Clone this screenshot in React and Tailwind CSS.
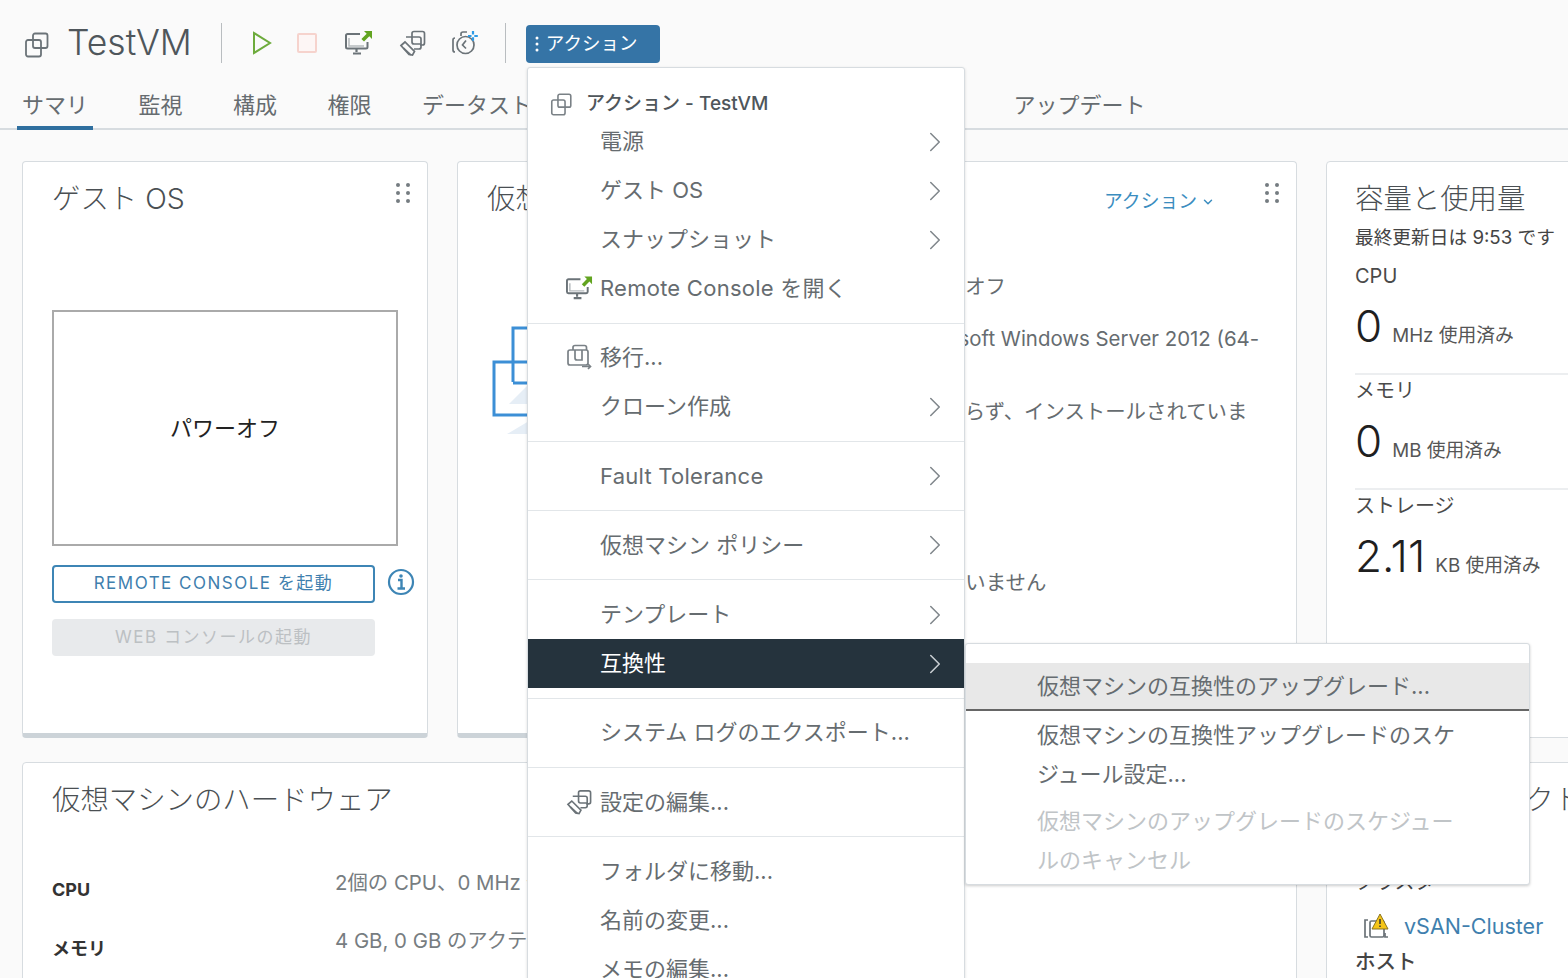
import { ChevronRight, ChevronDown } from 'lucide-react';

const TABS = ['サマリ', '監視', '構成', '権限', 'データストア', 'ネットワーク', 'スナップショット', 'アップデート'];

function VmIcon({ className }) {
  return (
    <svg viewBox="0 0 26 26" fill="none" stroke="currentColor" strokeWidth="1.8" className={className}>
      <path d="M9 8V3.500a2 2 0 0 1 2-2h10.500a2 2 0 0 1 2 2V14a2 2 0 0 1-2 2H17" />
      <rect x="2" y="8" width="15" height="16.500" rx="2" />
      <path d="M9 8v6a2 2 0 0 0 2 2h6" />
    </svg>
  );
}

function ConsoleIcon({ className }) {
  return (
    <svg viewBox="0 0 28 26" fill="none" className={className}>
      <path d="M15 4H2.500a1.500 1.500 0 0 0-1.500 1.500V17a1.500 1.500 0 0 0 1.500 1.500H21a1.500 1.500 0 0 0 1.500-1.500v-5" stroke="#6b7378" strokeWidth="2" />
      <path d="M4 8v8h15" stroke="#b5babd" strokeWidth="1.500" />
      <path d="M11.500 19v3M8 23.500h8" stroke="#6b7378" strokeWidth="2.200" />
      <path d="M19 1h8v8l-2.700-2.700-5.300 5.300-2.600-2.600 5.300-5.300z" fill="#62a420" />
    </svg>
  );
}

function EditIcon({ className }) {
  return (
    <svg viewBox="0 0 28 26" fill="none" stroke="#6b7378" strokeWidth="1.700" className={className}>
      <path d="M13 7V3.500a2 2 0 0 1 2-2h8.500a2 2 0 0 1 2 2V13a2 2 0 0 1-2 2H21" />
      <path d="M7 7h13a2 2 0 0 1 2 2v8a2 2 0 0 1-2 2h-5" />
      <path d="M13 7v5a2 2 0 0 0 2 2h7" />
      <path d="M2 15.500 6 12l9.500 9.500-2 3.500-3.500-.5z" />
      <path d="m4.500 18 7.500 7" />
    </svg>
  );
}

function SnapshotIcon({ className }) {
  return (
    <svg viewBox="0 0 28 26" fill="none" stroke="#6b7378" strokeWidth="1.700" className={className}>
      <path d="M10 6V4a2 2 0 0 1 2-2h4" />
      <path d="M4 8a2 2 0 0 0-2 2v10a2 2 0 0 0 2 2" />
      <circle cx="14.500" cy="15" r="8.500" />
      <path d="M15 10.500 11.500 15l3.500 3.500" />
      <path d="M22 1v10M17 6h10" stroke="#2e9be6" strokeWidth="2.200" strokeDasharray="3.500 2.800" />
    </svg>
  );
}

function MigrateIcon({ className }) {
  return (
    <svg viewBox="0 0 26 26" fill="none" stroke="#7a8186" strokeWidth="1.700" className={className}>
      <path d="M7 6V3.500a2 2 0 0 1 2-2h9.500a2 2 0 0 1 2 2V6" />
      <rect x="2" y="6" width="20" height="15" rx="2" />
      <path d="M9 6v8a2 2 0 0 0 2 2h5V6" />
      <path d="M16 22.500h8M22 20l2.500 2.500L22 25" />
    </svg>
  );
}

function Dots() {
  return (
    <svg viewBox="0 0 16 22" fill="#757c81" className="w-4 h-[22px] shrink-0">
      <circle cx="3" cy="3" r="2" /><circle cx="13" cy="3" r="2" />
      <circle cx="3" cy="11" r="2" /><circle cx="13" cy="11" r="2" />
      <circle cx="3" cy="19" r="2" /><circle cx="13" cy="19" r="2" />
    </svg>
  );
}

function Card({ className, children }) {
  return <div className={'shrink-0 bg-white border border-[#d7dce0] rounded-[4px] ' + (className || '')}>{children}</div>;
}

function MenuRow({ label, icon, arrow, active }) {
  return (
    <div className={'h-[49px] flex items-center pl-[72px] pr-[12px] relative ' + (active ? 'bg-[#25333d] text-white' : '')}>
      {icon && <span className="absolute left-[38px] top-[11px]">{icon}</span>}
      <span className="flex-1">{label}</span>
      {arrow && <ChevronRight className={'w-[34px] h-[34px] ' + (active ? 'text-[#c9ced2]' : 'text-[#80878c]')} strokeWidth={1.100} />}
    </div>
  );
}

function MenuDivider() {
  return <div className="h-px bg-[#e2e6e9] my-[9.625px]" />;
}

function Usage({ label, value, unit }) {
  return (
    <div className="h-[115px] border-t-2 border-[#eceef0] first:border-transparent">
      <div className="text-[20px] leading-[32px] text-[#4a4a4a]">{label}</div>
      <div className="flex items-baseline gap-[10px] mt-[4px]">
        <span className="text-[44px] leading-[60px] font-light text-[#1f1f1f]">{value}</span>
        <span className="text-[18.800px] text-[#565656]">{unit}</span>
      </div>
    </div>
  );
}

export default function App() {
  return (
    <div className="relative w-[1568px] h-[978px] overflow-hidden bg-[#fafafa] text-[#565656] font-[Inter,'Noto_Sans_CJK_JP',sans-serif]">
      <header className="h-[86px] flex items-center pl-[24px]">
        <VmIcon className="w-[26px] h-[26px] text-[#6b7378] mt-[3px]" />
        <h1 className="ml-[17px] text-[35.500px] font-light text-[#4f565b] leading-none">TestVM</h1>
        <div className="w-px h-[40px] bg-[#b9bdc0] ml-[29px]" />
        <svg viewBox="0 0 20 24" fill="none" stroke="#6dab3c" strokeWidth="2" className="w-[20px] h-[24px] ml-[30px]">
          <path d="M2 2v20l16-10z" />
        </svg>
        <div className="w-[20px] h-[20px] ml-[25px] border-2 border-[#f6d3cd] bg-[#fdf6f5] rounded-[2px]" />
        <ConsoleIcon className="w-[28px] h-[26px] ml-[28px]" />
        <EditIcon className="w-[28px] h-[26px] ml-[26px]" />
        <SnapshotIcon className="w-[28px] h-[26px] ml-[24px]" />
        <div className="w-px h-[40px] bg-[#b9bdc0] ml-[26px]" />
        <button className="ml-[20px] mt-[2px] w-[134px] h-[38px] bg-[#3574a6] rounded-[4px] text-white text-[18.500px] flex items-center pl-[9px] gap-[7px]">
          <svg viewBox="0 0 4 18" fill="white" className="w-[4px] h-[18px]">
            <circle cx="2" cy="3" r="1.500" /><circle cx="2" cy="9" r="1.500" /><circle cx="2" cy="15" r="1.500" />
          </svg>
          アクション
        </button>
      </header>

      <nav className="h-[44px] flex gap-[50.500px] pl-[22px] border-b-2 border-[#d7dce0] text-[22px] text-[#666c70]">
        {TABS.map((t, i) => (
          <div key={t} className="relative leading-[38px]">
            {t}
            {i === 0 && <div className="absolute -left-[5px] -right-[5px] top-[40px] h-[4px] bg-[#2f6f9f]" />}
          </div>
        ))}
      </nav>

      <main className="pl-[22px] pt-[31px]">
        <div className="flex gap-[29px] h-[577px]">
          <Card className="w-[406px] border-b-[5px] border-b-[#ccd3d8] px-[29px] pt-[17px]">
            <div className="flex justify-between">
              <h2 className="text-[28.400px] leading-[40px] font-light text-[#4a4f53]">ゲスト OS</h2>
              <div className="-mr-[13px] mt-[3px]"><Dots /></div>
            </div>
            <div className="mt-[91px] w-[346px] h-[236px] border-2 border-[#aaaaaa] flex items-center justify-center text-[22px] text-[#222]">
              パワーオフ
            </div>
            <div className="flex items-center mt-[19px]">
              <button className="shrink-0 w-[323px] h-[38px] border-2 border-[#3d85b5] rounded-[4px] text-[17px] tracking-[1.500px] text-[#3f7fae] whitespace-nowrap">REMOTE CONSOLE を起動</button>
              <svg viewBox="0 0 28 28" fill="none" className="shrink-0 w-[28px] h-[28px] ml-[12px] -mt-[4px]" stroke="#3d85b5">
                <circle cx="14" cy="14" r="12" strokeWidth="2.200" />
                <path d="M11 12h3.500v8M10.500 20.500h7.500" strokeWidth="2.400" />
                <circle cx="14" cy="8" r="1.800" fill="#3d85b5" stroke="none" />
              </svg>
            </div>
            <button className="block mt-[16px] w-[323px] h-[37px] bg-[#e8eaec] rounded-[4px] text-[17px] tracking-[1.500px] text-[#bcc0c3]">WEB コンソールの起動</button>
          </Card>

          <Card className="w-[840px] border-b-[5px] border-b-[#ccd3d8] pl-[29px] pt-[17px] pr-[16px]">
            <div className="flex items-start">
              <h2 className="text-[28.400px] leading-[40px] font-light text-[#4a4f53]">仮想マシンの詳細</h2>
              <button className="ml-auto mr-[49px] mt-[7px] flex items-center gap-[4px] text-[18.800px] leading-[32px] text-[#3b8dbf]">
                アクション <ChevronDown className="w-[14px] h-[14px]" strokeWidth={2.500} />
              </button>
              <div className="mt-[3px]"><Dots /></div>
            </div>
            <div className="flex mt-[50px]">
              <svg viewBox="0 0 80 130" fill="none" stroke="#3c8fd6" strokeWidth="3" className="w-[80px] h-[130px] mt-[56px] ml-[5px] shrink-0">
                <path d="M17 79 37 59h23v20zM15 109l22-13h23v13z" fill="#e6eef6" stroke="none" />
                <path d="M21 36V3h50v55H21" />
                <path d="M2 37h53v53H2z" />
                <path d="M21 37v20" />
              </svg>
              <dl className="text-[20.400px] leading-[36px] text-[#666c70]">
                <div className="flex h-[52px]"><dt className="w-[332px] shrink-0">電源ステータス</dt><dd>パワーオフ</dd></div>
                <div className="flex h-[73px]"><dt className="w-[332px] shrink-0">ゲスト OS</dt><dd className="w-[370px]">Microsoft Windows Server 2012 (64-bit)</dd></div>
                <div className="flex h-[171px]"><dt className="w-[292px] shrink-0">VMware Tools</dt><dd className="w-[400px]">実行しておらず、インストールされていません</dd></div>
                <div className="flex h-[52px]"><dt className="w-[292px] shrink-0">DNS 名</dt><dd>接続されていません</dd></div>
              </dl>
            </div>
          </Card>

          <Card className="w-[300px] pl-[28px] pt-[17px]">
            <h2 className="text-[28.400px] leading-[40px] font-light text-[#4a4f53]">容量と使用量</h2>
            <div className="text-[18.700px] leading-[36px] mt-[1px] text-[#444] whitespace-nowrap">最終更新日は 9:53 です</div>
            <div className="mt-[2px]">
              <Usage label="CPU" value="0" unit="MHz 使用済み" />
              <Usage label="メモリ" value="0" unit="MB 使用済み" />
              <Usage label="ストレージ" value="2.11" unit="KB 使用済み" />
            </div>
          </Card>
        </div>

        <div className="flex gap-[29px] mt-[24px] h-[300px]">
          <Card className="w-[1275px] pl-[29px] pt-[17px]">
            <h2 className="text-[28.400px] leading-[40px] font-light text-[#4a4f53]">仮想マシンのハードウェア</h2>
            <div className="mt-[46px] text-[18px]">
              <div className="flex h-[59px]">
                <div className="w-[283px] font-bold text-[#333] leading-[48px]">CPU</div>
                <div className="text-[#777d81] text-[20.400px] leading-[34px]">2個の CPU、0 MHz 使用済み</div>
              </div>
              <div className="flex h-[59px]">
                <div className="w-[283px] font-bold text-[#333] leading-[48px]">メモリ</div>
                <div className="text-[#777d81] text-[20.400px] leading-[32px]">4 GB, 0 GB のアクティブメモリ</div>
              </div>
            </div>
          </Card>
          <Card className="w-[300px] pl-[28px] pt-[17px]">
            <h2 className="text-[28.400px] leading-[40px] font-light text-[#4a4f53] whitespace-nowrap">関連オブジェクト</h2>
            <div className="mt-[44px] text-[20px] leading-[36px] text-[#444]">クラスタ</div>
            <div className="flex items-center mt-[8px] ml-[8px] gap-[13px] text-[21.500px] leading-[36px] text-[#3f7fae]">
              <svg viewBox="0 0 28 26" fill="none" className="w-[28px] h-[26px]">
                <path d="M5 7H2v17h3M22 20v4h3" stroke="#6b7378" strokeWidth="1.700" />
                <rect x="7" y="8" width="14" height="16" rx="1.500" stroke="#6b7378" strokeWidth="1.700" />
                <path d="M17 1l8 15H9z" fill="#f5c518" stroke="#8a7320" strokeWidth="1" />
                <path d="M17 6v5M17 12.500v1.500" stroke="#333" strokeWidth="1.500" />
              </svg>
              vSAN-Cluster
            </div>
            <div className="text-[20.500px] leading-[36px] font-medium text-[#444]">ホスト</div>
          </Card>
        </div>
      </main>

      <div className="absolute left-[527px] top-[67px] w-[438px] h-[930px] bg-white border border-[#d7dce0] rounded-[3px] shadow-[0_1px_3px_rgba(0,0,0,0.15)] text-[22px] text-[#666c70]">
        <div className="flex items-center h-[26px] mt-[23px] pl-[22px] gap-[13px] text-[19px] font-medium text-[#4f565b]">
          <VmIcon className="w-[23px] h-[23px] text-[#7a8186]" />
          アクション - TestVM
        </div>
        <MenuRow label="電源" arrow />
        <MenuRow label="ゲスト OS" arrow />
        <MenuRow label="スナップショット" arrow />
        <MenuRow label={<span className="tracking-[0.250px]">Remote Console を開く</span>} icon={<ConsoleIcon className="w-[27px] h-[26px]" />} />
        <MenuDivider />
        <MenuRow label="移行..." icon={<MigrateIcon className="w-[26px] h-[26px]" />} />
        <MenuRow label="クローン作成" arrow />
        <MenuDivider />
        <MenuRow label={<span className="tracking-[0.250px]">Fault Tolerance</span>} arrow />
        <MenuDivider />
        <MenuRow label="仮想マシン ポリシー" arrow />
        <MenuDivider />
        <MenuRow label="テンプレート" arrow />
        <MenuRow label="互換性" arrow active />
        <MenuDivider />
        <MenuRow label="システム ログのエクスポート..." />
        <MenuDivider />
        <MenuRow label="設定の編集..." icon={<EditIcon className="w-[27px] h-[26px]" />} />
        <MenuDivider />
        <MenuRow label="フォルダに移動..." />
        <MenuRow label="名前の変更..." />
        <MenuRow label="メモの編集..." />
      </div>

      <div className="absolute left-[965px] top-[643px] w-[565px] h-[242px] pt-[19px] bg-white border border-[#d7dce0] rounded-[3px] shadow-[0_1px_3px_rgba(0,0,0,0.2)] text-[22px] leading-[38.500px] text-[#666c70]">
        <div className="h-[48px] pl-[71px] flex items-center bg-[#e8e8e8] border-b-2 border-[#666]">仮想マシンの互換性のアップグレード...</div>
        <div className="pl-[71px] pr-[70px] pt-[5px]">仮想マシンの互換性アップグレードのスケジュール設定...</div>
        <div className="pl-[71px] pr-[70px] pt-[9px] text-[#c0c4c7]">仮想マシンのアップグレードのスケジュールのキャンセル</div>
      </div>
    </div>
  );
}
